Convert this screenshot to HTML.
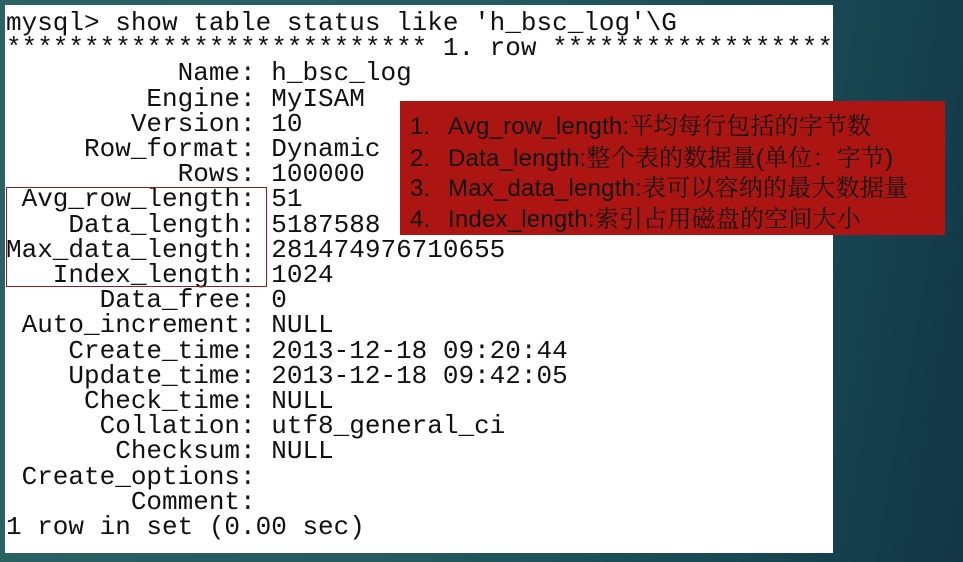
<!DOCTYPE html>
<html><head><meta charset="utf-8"><style>
html,body{margin:0;padding:0}
body{width:963px;height:562px;overflow:hidden;position:relative;
background:linear-gradient(100deg,#2b6364 0%,#245a60 45%,#1a4a55 75%,#123646 100%);}
.panel{position:absolute;left:5px;top:5px;width:828px;height:548px;background:#fff;overflow:hidden;}
pre{margin:0;position:absolute;left:1px;top:6px;font-family:"Liberation Mono",monospace;font-size:26px;line-height:25.2px;color:#111;letter-spacing:0;}
.hl{position:absolute;left:1px;top:182px;width:259px;height:98px;border:1.5px solid #8b1e1e;}
.red{position:absolute;left:400px;top:101px;width:545px;height:134px;background:#ad1513;
font-family:"Liberation Sans","Noto Serif CJK SC",sans-serif;font-size:24px;color:#111;}
.red div{position:absolute;left:10px;white-space:nowrap;letter-spacing:0.2px}
.red span{display:inline-block;width:38px}
</style></head><body>
<div class="panel">
<pre>mysql&gt; show table status like 'h_bsc_log'\G
*************************** 1. row ***************************
           Name: h_bsc_log
         Engine: MyISAM
        Version: 10
     Row_format: Dynamic
           Rows: 100000
 Avg_row_length: 51
    Data_length: 5187588
Max_data_length: 281474976710655
   Index_length: 1024
      Data_free: 0
 Auto_increment: NULL
    Create_time: 2013-12-18 09:20:44
    Update_time: 2013-12-18 09:42:05
     Check_time: NULL
      Collation: utf8_general_ci
       Checksum: NULL
 Create_options: 
        Comment: 
1 row in set (0.00 sec)</pre>
<div class="hl"></div>
</div>
<div class="red">
<div style="top:5px"><span>1.</span>Avg_row_length:平均每行包括的字节数</div>
<div style="top:37px"><span>2.</span>Data_length:整个表的数据量(单位：字节)</div>
<div style="top:67px"><span>3.</span>Max_data_length:表可以容纳的最大数据量</div>
<div style="top:98px"><span>4.</span>Index_length:索引占用磁盘的空间大小</div>
</div>
</body></html>
